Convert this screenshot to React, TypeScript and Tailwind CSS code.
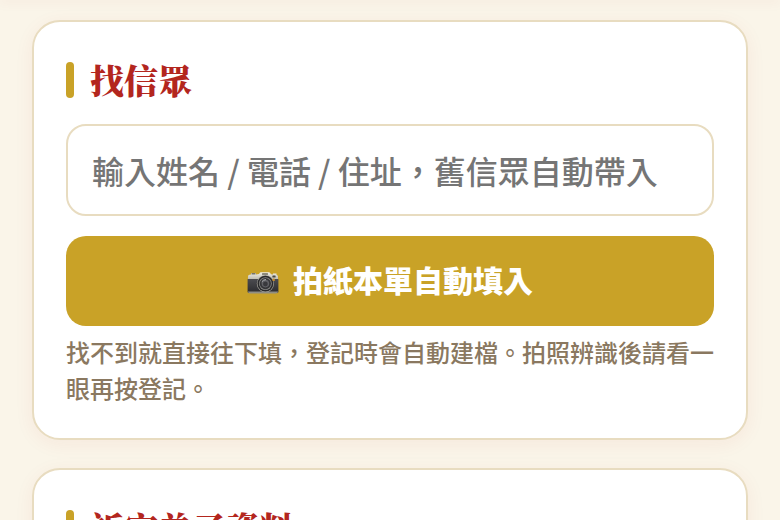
import { useState, type ReactNode } from 'react';

function CameraIcon() {
  return (
    <svg viewBox="0 -8 32 30" className="h-[30px] w-8 shrink-0" aria-hidden="true">
      <defs>
        <linearGradient id="metal" x1="0" y1="0" x2="0" y2="1">
          <stop offset="0" stopColor="#f2f1ea" />
          <stop offset="1" stopColor="#b9b7ab" />
        </linearGradient>
        <linearGradient id="leather" x1="0" y1="0" x2="0" y2="1">
          <stop offset="0" stopColor="#4c4c50" />
          <stop offset="1" stopColor="#2b2b2e" />
        </linearGradient>
      </defs>
      <path d="M1 8V4.5Q1 3 2.5 2.8L4 2.6V1.2H9V2.4L12 2 13 .6Q13.3 .2 14 .2H22Q22.8 .2 23 .8L24 2.2 26 2.4V1.4H29.5V2.8Q31 3.2 31 4.6V8Z" fill="url(#metal)" />
      <rect x="4.5" y="1" width="4" height="1.6" rx=".5" fill="#77766c" />
      <rect x="15" y="1" width="6" height="2" rx=".5" fill="#8b897c" />
      <rect x="25.4" y="3.6" width="3.2" height="2" rx=".5" fill="#4a4943" />
      <path d="M.6 7H31.4V19.4Q31.4 21 30 21H2Q.6 21 .6 19.4Z" fill="url(#leather)" />
      <path d="M1 19.6H31V20Q30.8 21.4 29 21.4H3Q1.2 21.4 1 20Z" fill="#8f8d83" />
      <circle cx="18.4" cy="11.6" r="8.6" fill="#a3a199" />
      <circle cx="18.4" cy="11.6" r="7.9" fill="#29292b" />
      <circle cx="18.4" cy="11.6" r="6.4" fill="#858583" />
      <circle cx="18.4" cy="11.6" r="5.6" fill="#363639" />
      <circle cx="18.4" cy="11.6" r="3.8" fill="#626267" />
      <circle cx="18.4" cy="12" r="2.4" fill="#39393d" />
      <path d="M14.8 9.8Q16.2 7.6 19 7.6" fill="none" stroke="#b4b6b8" strokeWidth="1" />
      <rect x="25.6" y="6.4" width="2.2" height="2.6" rx=".6" fill="#c48a2c" />
    </svg>
  );
}

function Card({ title, children }: { title: string; children?: ReactNode }) {
  return (
    <section className="rounded-[28px] border-2 border-[#e8dcc0] bg-white px-8 pt-[34px] pb-8 shadow-[0_4px_20px_rgba(179,38,30,0.06)]">
      <h2 className="mb-5 flex items-center gap-4 font-['Noto_Serif_CJK_TC','Noto_Serif_TC',serif] text-[34px] leading-12 font-black text-[#b3261e]">
        <span className="h-9 w-2 rounded-full bg-[#c9a227]" />
        {title}
      </h2>
      {children}
    </section>
  );
}

export default function App() {
  const [keyword, setKeyword] = useState('');

  return (
    <div className="h-screen overflow-y-auto bg-[#faf5e9] font-['Noto_Sans_CJK_TC',sans-serif] [scrollbar-width:none]">
      <header className="h-0 shadow-[0_0_12px_2px_rgba(179,38,30,0.08)]" />
      <main className="flex flex-col gap-7 px-8 pt-5">
        <Card title="找信眾">
          <input
            type="text"
            aria-label="找信眾"
            value={keyword}
            onChange={e => setKeyword(e.target.value)}
            placeholder="輸入姓名 / 電話 / 住址，舊信眾自動帶入"
            className="block h-23 w-full rounded-[20px] border-2 border-[#e8dcc0] bg-white px-6 text-[32px] font-medium outline-none placeholder:text-[#757575]"
          />
          <button
            type="button"
            className="mt-5 flex h-[90px] w-full items-center justify-center gap-3.5 rounded-[20px] bg-[#c9a227] pb-1 text-[30px] font-black text-white"
          >
            <CameraIcon />
            拍紙本單自動填入
          </button>
          <p className="mt-2 text-2xl leading-9 font-medium text-[#8a7860]">
            找不到就直接往下填，登記時會自動建檔。拍照辨識後請看一眼再按登記。
          </p>
        </Card>
        <Card title="祈安弟子資料" />
      </main>
    </div>
  );
}
